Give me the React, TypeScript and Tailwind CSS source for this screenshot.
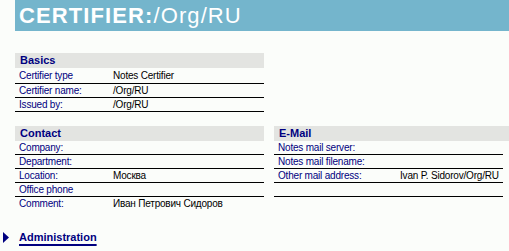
type Row = { label: string; value?: string };

const basics: Row[] = [
  { label: 'Certifier type', value: 'Notes Certifier' },
  { label: 'Certifier name:', value: '/Org/RU' },
  { label: 'Issued by:', value: '/Org/RU' },
];

const contact: Row[] = [
  { label: 'Company:' },
  { label: 'Department:' },
  { label: 'Location:', value: 'Москва' },
  { label: 'Office phone' },
  { label: 'Comment:', value: 'Иван Петрович Сидоров' },
];

const email: Row[] = [
  { label: 'Notes mail server:' },
  { label: 'Notes mail filename:' },
  { label: 'Other mail address:', value: 'Ivan P. Sidorov/Org/RU' },
  { label: '' },
];

function SectionHeader({ title }: { title: string }) {
  return (
    <div className="flex h-[15px] items-center bg-[#e3e4e1] pl-[5px] text-[11px] font-bold leading-none text-[#000080]">
      {title}
    </div>
  );
}

function FieldRow({
  row,
  labelWidth,
  last,
  tall,
}: {
  row: Row;
  labelWidth: string;
  last?: boolean;
  tall?: boolean;
}) {
  return (
    <div
      className={`flex items-center pl-[4px] text-[10px] leading-none tracking-[-0.2px] ${
        tall ? 'h-[16px]' : 'h-[14px]'
      } ${last ? '' : 'border-b border-black'}`}
    >
      <span className={`${labelWidth} shrink-0 text-[#000080]`}>{row.label}</span>
      <span className="text-black">{row.value}</span>
    </div>
  );
}

export default function App() {
  return (
    <div
      className="min-h-[251px] w-[509px] overflow-hidden bg-[#fbfdfa]"
      style={{ fontFamily: '"Liberation Sans", Arial, sans-serif' }}
    >
      <div className="ml-[15px] flex h-[31px] items-center bg-[#74b5cc] pl-[4px] pt-[1px] text-[22px] leading-none tracking-[1.1px] text-white">
        <span className="font-bold">CERTIFIER:</span>
        <span>/Org/RU</span>
      </div>

      <section className="ml-[15px] mt-[22px] w-[249px]">
        <SectionHeader title="Basics" />
        {basics.map((row, i) => (
          <FieldRow key={row.label} row={row} labelWidth="w-[94px]" tall={i === 0} />
        ))}
      </section>

      <div className="mt-[14px] flex gap-[10px] pl-[15px]">
        <section className="w-[249px]">
          <SectionHeader title="Contact" />
          {contact.map((row, i) => (
            <FieldRow
              key={row.label}
              row={row}
              labelWidth="w-[94px]"
              last={i === contact.length - 1}
            />
          ))}
        </section>

        <section className="flex-1">
          <SectionHeader title="E-Mail" />
          <div className="mr-[6px]">
            {email.map((row, i) => (
              <FieldRow key={i} row={row} labelWidth="w-[122px]" />
            ))}
          </div>
        </section>
      </div>

      <div className="mt-[21px] flex items-center pl-[3px]">
        <svg width="6" height="11" viewBox="0 0 6 11" className="shrink-0">
          <polygon points="0,0 6,5.5 0,11" fill="#000080" />
        </svg>
        <a
          href="#"
          className="ml-[10px] text-[11px] font-bold leading-none text-[#000080] underline decoration-2 underline-offset-[3px]"
        >
          Administration
        </a>
      </div>
    </div>
  );
}
